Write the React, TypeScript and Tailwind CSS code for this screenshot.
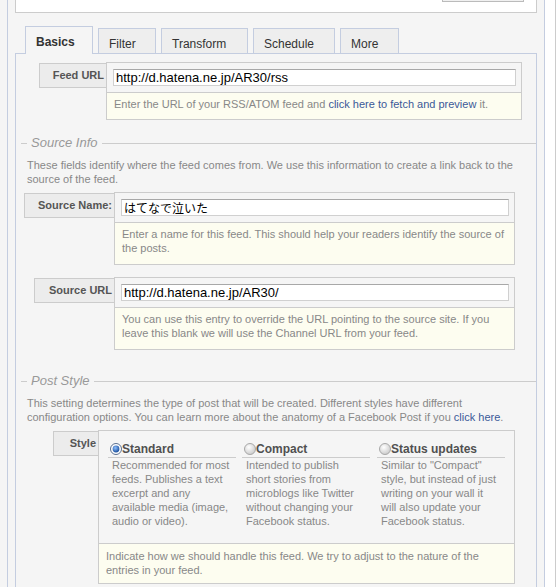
import React from "react";

const Radio = ({ on }: { on?: boolean }) =>
  on ? (
    <svg width="12" height="12" viewBox="0 0 12 12" className="shrink-0">
      <defs>
        <radialGradient id="rOn" cx="40%" cy="35%" r="65%">
          <stop offset="0%" stopColor="#8fc0ff" />
          <stop offset="100%" stopColor="#1a4f9c" />
        </radialGradient>
      </defs>
      <circle cx="6" cy="6" r="5.5" fill="#fff" stroke="#5a6f8f" />
      <circle cx="6" cy="6" r="3.4" fill="url(#rOn)" />
    </svg>
  ) : (
    <svg width="12" height="12" viewBox="0 0 12 12" className="shrink-0">
      <defs>
        <radialGradient id="rOff" cx="40%" cy="35%" r="70%">
          <stop offset="0%" stopColor="#ffffff" />
          <stop offset="100%" stopColor="#c8c8c8" />
        </radialGradient>
      </defs>
      <circle cx="6" cy="6" r="5.5" fill="url(#rOff)" stroke="#a8a8a8" />
    </svg>
  );

const Label = ({ text, cls }: { text: string; cls: string }) => (
  <div
    className={`h-[25px] mt-[1px] shrink-0 border-y border-l border-[#cccccc] bg-[#ececec] flex items-center justify-end pr-[2px] font-bold text-[11px] text-[#555555] ${cls}`}
  >
    {text}
  </div>
);

const Field = ({
  value,
  help,
  cls,
  jp,
  pb,
}: {
  value: string;
  help: React.ReactNode;
  cls: string;
  jp?: boolean;
  pb: string;
}) => (
  <div className={`shrink-0 border border-[#cccccc] ${cls}`}>
    <div className="pl-[6px] pr-[5px] pt-[6px] pb-[6px]">
      <div
        className={`h-[17px] bg-white border border-[#d0d0d0] border-t-[#a8a8a8] px-[2px] flex items-center text-black ${
          jp
            ? "font-['Noto_Sans_CJK_JP',sans-serif] text-[12px]"
            : "text-[13px]"
        }`}
      >
        {value}
      </div>
    </div>
    <div
      className={`border-t border-[#cccccc] bg-[#fdfdf0] pl-[7px] pt-[4px] leading-[14px] text-[11px] text-[#888888] ${pb}`}
    >
      {help}
    </div>
  </div>
);

const Legend = ({ text }: { text: string }) => (
  <div className="flex items-center ml-[5px] h-[14px]">
    <div className="w-[6px] h-px bg-[#cccccc]" />
    <div className="px-[4px] italic text-[13px] leading-[14px] text-[#999999]">
      {text}
    </div>
    <div className="flex-1 h-px bg-[#cccccc]" />
  </div>
);

const Option = ({
  on,
  title,
  lines,
  cls,
}: {
  on?: boolean;
  title: string;
  lines: string[];
  cls: string;
}) => (
  <div className={`w-[128px] shrink-0 ${cls}`}>
    <div className="h-[18px] flex items-center border-b border-[#cccccc] pl-[2px] font-bold text-[12px] text-[#505050]">
      <Radio on={on} />
      <span>{title}</span>
    </div>
    <div className="pl-[4px] leading-[14px] text-[11px] text-[#888888]">
      {lines.map((l, i) => (
        <div key={i} className="whitespace-nowrap">
          {l}
        </div>
      ))}
    </div>
  </div>
);

export default function App() {
  const tabs = [
    { t: "Filter", w: "w-[58px]" },
    { t: "Transform", w: "w-[87px]" },
    { t: "Schedule", w: "w-[82px]" },
    { t: "More", w: "w-[59px]" },
  ];
  return (
    <div className="w-[559px] h-[587px] overflow-hidden flex bg-white font-['Liberation_Sans',sans-serif] text-[11px]">
      <div className="w-[7px] shrink-0 bg-[#f5f5f5]" />
      <div className="w-[538px] shrink-0 border-x border-[#c4cde0] bg-[#f5f5f5] px-[7px]">
        {/* top box */}
        <div className="h-[13px] border-x border-b border-[#cccccc] bg-white flex justify-end pr-[12px]">
          <div className="w-[82px] h-[2px] border-x border-b border-[#bbbbbb] bg-[#f0f0f0]" />
        </div>

        {/* tabs */}
        <div className="mt-[13px] h-[27px] flex items-end pl-[10px]">
          <div className="relative z-10 -mb-px w-[68px] h-[28px] border-x border-t border-[#c4cde0] bg-[#f5f5f5] pl-[10px] pt-[8px] font-bold text-[12px] leading-[14px] text-[#333333]">
            Basics
          </div>
          {tabs.map((x) => (
            <div
              key={x.t}
              className={`ml-[5px] ${x.w} h-[25px] border-x border-t border-[#c4cde0] bg-[#eeeeee] pl-[10px] pt-[8px] text-[12px] leading-[14px] text-[#333333]`}
            >
              {x.t}
            </div>
          ))}
        </div>

        {/* panel */}
        <div className="h-[600px] border-x border-t border-[#c4cde0] bg-[#f5f5f5]">
          <div className="pt-[8px] flex items-start">
            <Label text="Feed URL" cls="ml-[23px] w-[67px]" />
            <Field
              cls="w-[416px]"
              pb="pb-[8px]"
              value="http://d.hatena.ne.jp/AR30/rss"
              help={
                <span>
                  Enter the URL of your RSS/ATOM feed and{" "}
                  <span className="text-[#3b5998]">
                    click here to fetch and preview
                  </span>{" "}
                  it.
                </span>
              }
            />
          </div>

          <div className="mt-[16px]">
            <Legend text="Source Info" />
          </div>
          <div className="mt-[8px] pl-[11px] leading-[14px] text-[#888888] whitespace-nowrap">
            These fields identify where the feed comes from. We use this
            information to create a link back to the
            <br />
            source of the feed.
          </div>

          <div className="mt-[6px] flex items-start">
            <Label text="Source Name:" cls="ml-[8px] w-[90px]" />
            <Field
              cls="w-[401px]"
              pb="pb-[9px]"
              jp
              value="はてなで泣いた"
              help={
                <span className="whitespace-nowrap">
                  Enter a name for this feed. This should help your readers
                  identify the source of
                  <br />
                  the posts.
                </span>
              }
            />
          </div>

          <div className="mt-[12px] flex items-start">
            <Label text="Source URL" cls="ml-[18px] w-[80px]" />
            <Field
              cls="w-[401px]"
              pb="pb-[9px]"
              value="http://d.hatena.ne.jp/AR30/"
              help={
                <span className="whitespace-nowrap">
                  You can use this entry to override the URL pointing to the
                  source site. If you
                  <br />
                  leave this blank we will use the Channel URL from your feed.
                </span>
              }
            />
          </div>

          <div className="mt-[24px]">
            <Legend text="Post Style" />
          </div>
          <div className="mt-[8px] pl-[11px] leading-[14px] text-[#888888] whitespace-nowrap">
            This setting determines the type of post that will be created.
            Different styles have different
            <br />
            configuration options. You can learn more about the anatomy of a
            Facebook Post if you{" "}
            <span className="text-[#3b5998]">click here</span>.
          </div>

          <div className="mt-[6px] flex items-start">
            <Label text="Style" cls="ml-[37px] w-[45px]" />
            <div className="w-[417px] shrink-0 border border-[#cccccc]">
              <div className="flex pl-[9px] pt-[9px] pb-[15px]">
                <Option
                  on
                  title="Standard"
                  cls=""
                  lines={[
                    "Recommended for most",
                    "feeds. Publishes a text",
                    "excerpt and any",
                    "available media (image,",
                    "audio or video).",
                  ]}
                />
                <Option
                  title="Compact"
                  cls="ml-[6px]"
                  lines={[
                    "Intended to publish",
                    "short stories from",
                    "microblogs like Twitter",
                    "without changing your",
                    "Facebook status.",
                  ]}
                />
                <Option
                  title="Status updates"
                  cls="ml-[7px]"
                  lines={[
                    'Similar to "Compact"',
                    "style, but instead of just",
                    "writing on your wall it",
                    "will also update your",
                    "Facebook status.",
                  ]}
                />
              </div>
              <div className="border-t border-[#cccccc] bg-[#fdfdf0] pl-[7px] pt-[5px] pb-[6px] leading-[14px] text-[#888888] whitespace-nowrap">
                Indicate how we should handle this feed. We try to adjust to
                the nature of the
                <br />
                entries in your feed.
              </div>
            </div>
          </div>
        </div>
      </div>
      <div className="w-[10px] shrink-0 bg-white" />
      <div className="w-px shrink-0 bg-[#cccccc]" />
      <div className="flex-1 bg-white" />
    </div>
  );
}
